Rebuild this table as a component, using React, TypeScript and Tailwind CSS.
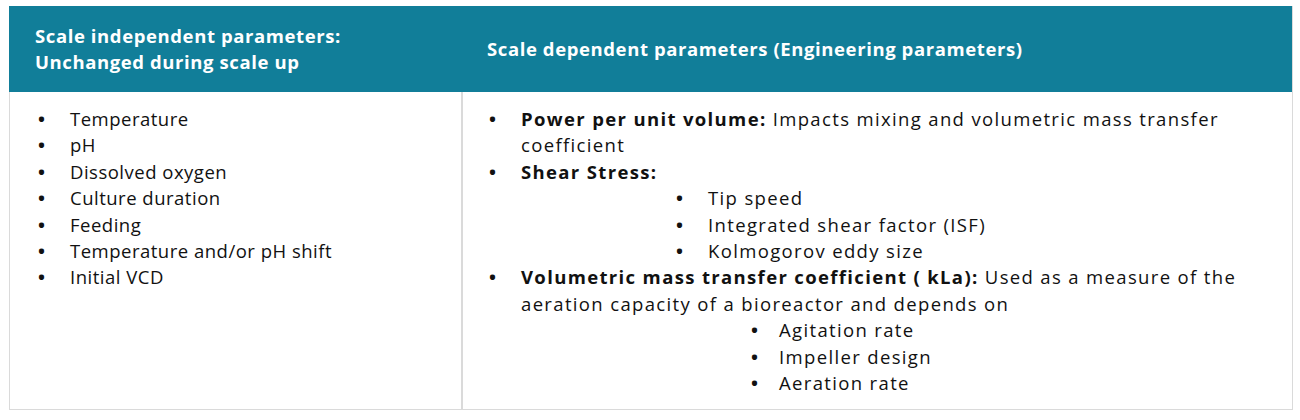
const LEFT = [
  "Temperature",
  "pH",
  "Dissolved oxygen",
  "Culture duration",
  "Feeding",
  "Temperature and/or pH shift",
  "Initial VCD",
];

function Item({ children, bullet = "w-8" }: { children: React.ReactNode; bullet?: string }) {
  return (
    <li className="flex">
      <span className={`${bullet} shrink-0 tracking-normal font-bold`}>•</span>
      <span>{children}</span>
    </li>
  );
}

export default function App() {
  return (
    <div className="w-[1300px] h-[420px] bg-white pl-[9px] pt-[6px] font-['Open_Sans',sans-serif] text-[#111]">
      <div className="w-[1284px] border-r border-b border-[#dadada]">
        {/* header */}
        <div className="flex h-[86px] bg-[#117e99] text-white font-bold text-[18.5px] tracking-[0.6px]">
          <div className="w-[454px] pl-[26px] flex flex-col justify-center leading-[26px]">
            <div>Scale independent parameters:</div>
            <div>Unchanged during scale up</div>
          </div>
          <div className="flex-1 pl-[24px] flex items-center">
            Scale dependent parameters (Engineering parameters)
          </div>
        </div>

        {/* body */}
        <div className="flex text-[18.5px] leading-[26.4px]">
          <ul className="w-[454px] pl-[28px] pt-[14px] border-l border-r-2 border-[#dadada] tracking-[0.5px]">
            {LEFT.map((t) => (
              <Item key={t}>{t}</Item>
            ))}
          </ul>
          <ul className="flex-1 pl-[26px] pr-[36px] pt-[14px] pb-[13px] tracking-[1.35px]">
            <Item>
              <b>Power per unit volume:</b> Impacts mixing and volumetric mass transfer coefficient
            </Item>
            <Item>
              <b>Shear Stress:</b>
            </Item>
            <li>
              <ul className="pl-[187px]">
                <Item>Tip speed</Item>
                <Item>Integrated shear factor (ISF)</Item>
                <Item>Kolmogorov eddy size</Item>
              </ul>
            </li>
            <Item>
              <b>Volumetric mass transfer coefficient ( kLa):</b> Used as a measure of the aeration
              capacity of a bioreactor and depends on
            </Item>
            <li>
              <ul className="pl-[262px]">
                <Item bullet="w-7">Agitation rate</Item>
                <Item bullet="w-7">Impeller design</Item>
                <Item bullet="w-7">Aeration rate</Item>
              </ul>
            </li>
          </ul>
        </div>
      </div>
    </div>
  );
}
